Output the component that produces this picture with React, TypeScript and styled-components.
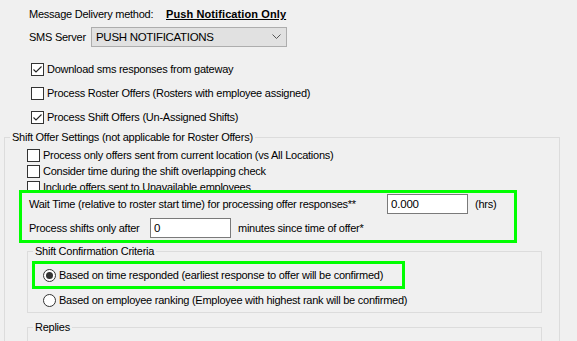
import React from "react";
import styled, { createGlobalStyle } from "styled-components";

const Global = createGlobalStyle`
  html, body { margin: 0; padding: 0; background: #f0f0f0; }
  body { font-family: "Liberation Sans", Arial, sans-serif; }
`;

const Page = styled.div`
  width: 577px;
  height: 341px;
  overflow: hidden;
  background: #f0f0f0;
  color: #000;
  font-family: "Liberation Sans", Arial, sans-serif;
  font-size: 11px;
  letter-spacing: -0.25px;
  position: relative;
`;

const Row = styled.div<{ $mt?: number; $ml?: number; $h?: number }>`
  display: flex;
  align-items: center;
  margin-top: ${(p) => p.$mt ?? 0}px;
  margin-left: ${(p) => p.$ml ?? 0}px;
  height: ${(p) => p.$h ?? 16}px;
  white-space: nowrap;
`;

const Label = styled.span<{ $w?: number }>`
  display: inline-block;
  width: ${(p) => (p.$w ? `${p.$w}px` : "auto")};
  flex: none;
`;

const Strong = styled.span`
  font-weight: bold;
  text-decoration: underline;
  letter-spacing: 0.1px;
`;

const Combo = styled.div`
  box-sizing: border-box;
  width: 196px;
  height: 20px;
  border: 1px solid #adadad;
  background: #e1e1e1;
  display: flex;
  align-items: center;
  justify-content: space-between;
  padding: 0 5px 0 4px;
  font-size: 11.5px;
  letter-spacing: -0.3px;
`;

const CheckList = styled.div<{ $mt: number; $ml: number; $row: number }>`
  display: flex;
  flex-direction: column;
  margin-top: ${(p) => p.$mt}px;
  margin-left: ${(p) => p.$ml}px;
  & > div {
    height: ${(p) => p.$row}px;
  }
`;

const CheckRow = styled.div`
  display: flex;
  align-items: center;
  gap: 3px;
  white-space: nowrap;
`;

const Box = styled.span`
  box-sizing: border-box;
  width: 13px;
  height: 13px;
  border: 1px solid #333;
  background: #fff;
  display: inline-flex;
  flex: none;
`;

const GroupBox = styled.fieldset<{ $mt: number; $ml: number; $w: number; $h?: number }>`
  box-sizing: border-box;
  margin: ${(p) => p.$mt}px 0 0 ${(p) => p.$ml}px;
  width: ${(p) => p.$w}px;
  ${(p) => (p.$h ? `height: ${p.$h}px;` : "")}
  padding: 0;
  border: 1px solid #dcdcdc;
  min-width: 0;
`;

const Caption = styled.legend`
  margin-left: 5px;
  padding: 0 2px;
  line-height: 14px;
  height: 14px;
  font-size: 11px;
`;

const Highlight = styled.div<{ $mt: number; $ml: number; $w: number }>`
  position: relative;
  box-sizing: border-box;
  margin-top: ${(p) => p.$mt}px;
  margin-left: ${(p) => p.$ml}px;
  width: ${(p) => p.$w}px;
  border: 3px solid #00ff00;
  background: #f0f0f0;
`;

const TextInput = styled.input`
  box-sizing: border-box;
  width: 81px;
  height: 20px;
  border: 1px solid #7a7a7a;
  background: #fff;
  font-family: "Liberation Sans", Arial, sans-serif;
  font-size: 11.5px;
  letter-spacing: -0.2px;
  padding: 0 3px;
  margin: 0;
  outline: none;
  color: #000;
  flex: none;
`;

const Unit = styled.span<{ $ml: number }>`
  margin-left: ${(p) => p.$ml}px;
`;

const RadioRow = styled.div<{ $pl: number; $h: number }>`
  display: flex;
  align-items: center;
  gap: 3px;
  height: ${(p) => p.$h}px;
  padding-left: ${(p) => p.$pl}px;
  white-space: nowrap;
`;

const Radio = styled.span<{ $on?: boolean }>`
  box-sizing: border-box;
  width: 13px;
  height: 13px;
  border-radius: 50%;
  border: 1px solid #333;
  background: #fff;
  display: inline-flex;
  align-items: center;
  justify-content: center;
  flex: none;
  &::after {
    content: "";
    width: 7px;
    height: 7px;
    border-radius: 50%;
    background: ${(p) => (p.$on ? "#333" : "transparent")};
  }
`;

const Check: React.FC<{ on?: boolean; label: string }> = ({ on, label }) => (
  <CheckRow>
    <Box>
      {on && (
        <svg width="11" height="11" viewBox="0 0 11 11">
          <path d="M1.5 5.5 L4 8 L9.5 2.5" fill="none" stroke="#222" strokeWidth="1.1" />
        </svg>
      )}
    </Box>
    <span>{label}</span>
  </CheckRow>
);

export default function App() {
  return (
    <Page>
      <Global />
      <Row $mt={6} $ml={29}>
        <Label $w={137}>Message Delivery method:</Label>
        <Strong>Push Notification Only</Strong>
      </Row>
      <Row $mt={5} $ml={29} $h={20}>
        <Label $w={62}>SMS Server</Label>
        <Combo>
          <span>PUSH NOTIFICATIONS</span>
          <svg width="9" height="6" viewBox="0 0 9 6">
            <path d="M0.5 0.5 L4.5 4.5 L8.5 0.5" fill="none" stroke="#555" strokeWidth="1" />
          </svg>
        </Combo>
      </Row>
      <CheckList $mt={10} $ml={31} $row={24}>
        <Check on label="Download sms responses from gateway" />
        <Check label="Process Roster Offers (Rosters with employee assigned)" />
        <Check on label="Process Shift Offers (Un-Assigned Shifts)" />
      </CheckList>
      <GroupBox $mt={1} $ml={4} $w={556} $h={240}>
        <Caption>Shift Offer Settings (not applicable for Roster Offers)</Caption>
        <CheckList $mt={3} $ml={22} $row={16}>
          <Check label="Process only offers sent from current location (vs All Locations)" />
          <Check label="Consider time during the shift overlapping check" />
          <Check label="Include offers sent to Unavailable employees" />
        </CheckList>
        <Highlight $mt={-5} $ml={14} $w={498}>
          <Row $mt={1} $ml={7} $h={20}>
            <Label $w={358}>Wait Time (relative to roster start time) for processing offer responses**</Label>
            <TextInput readOnly value="0.000" />
            <Unit $ml={7}>(hrs)</Unit>
          </Row>
          <Row $mt={4} $ml={7} $h={20}>
            <Label $w={121}>Process shifts only after</Label>
            <TextInput readOnly value="0" />
            <Unit $ml={7}>minutes since time of offer*</Unit>
          </Row>
          <Row $h={2} />
        </Highlight>
        <GroupBox $mt={1} $ml={22} $w={515} $h={69}>
          <Caption>Shift Confirmation Criteria</Caption>
          <Highlight $mt={3} $ml={4} $w={373}>
            <RadioRow $pl={8} $h={22}>
              <Radio $on />
              <span>Based on time responded (earliest response to offer will be confirmed)</span>
            </RadioRow>
          </Highlight>
          <RadioRow $pl={15} $h={22}>
            <Radio />
            <span>Based on employee ranking (Employee with highest rank will be confirmed)</span>
          </RadioRow>
        </GroupBox>
        <GroupBox $mt={7} $ml={22} $w={515} $h={60}>
          <Caption>Replies</Caption>
        </GroupBox>
      </GroupBox>
    </Page>
  );
}
